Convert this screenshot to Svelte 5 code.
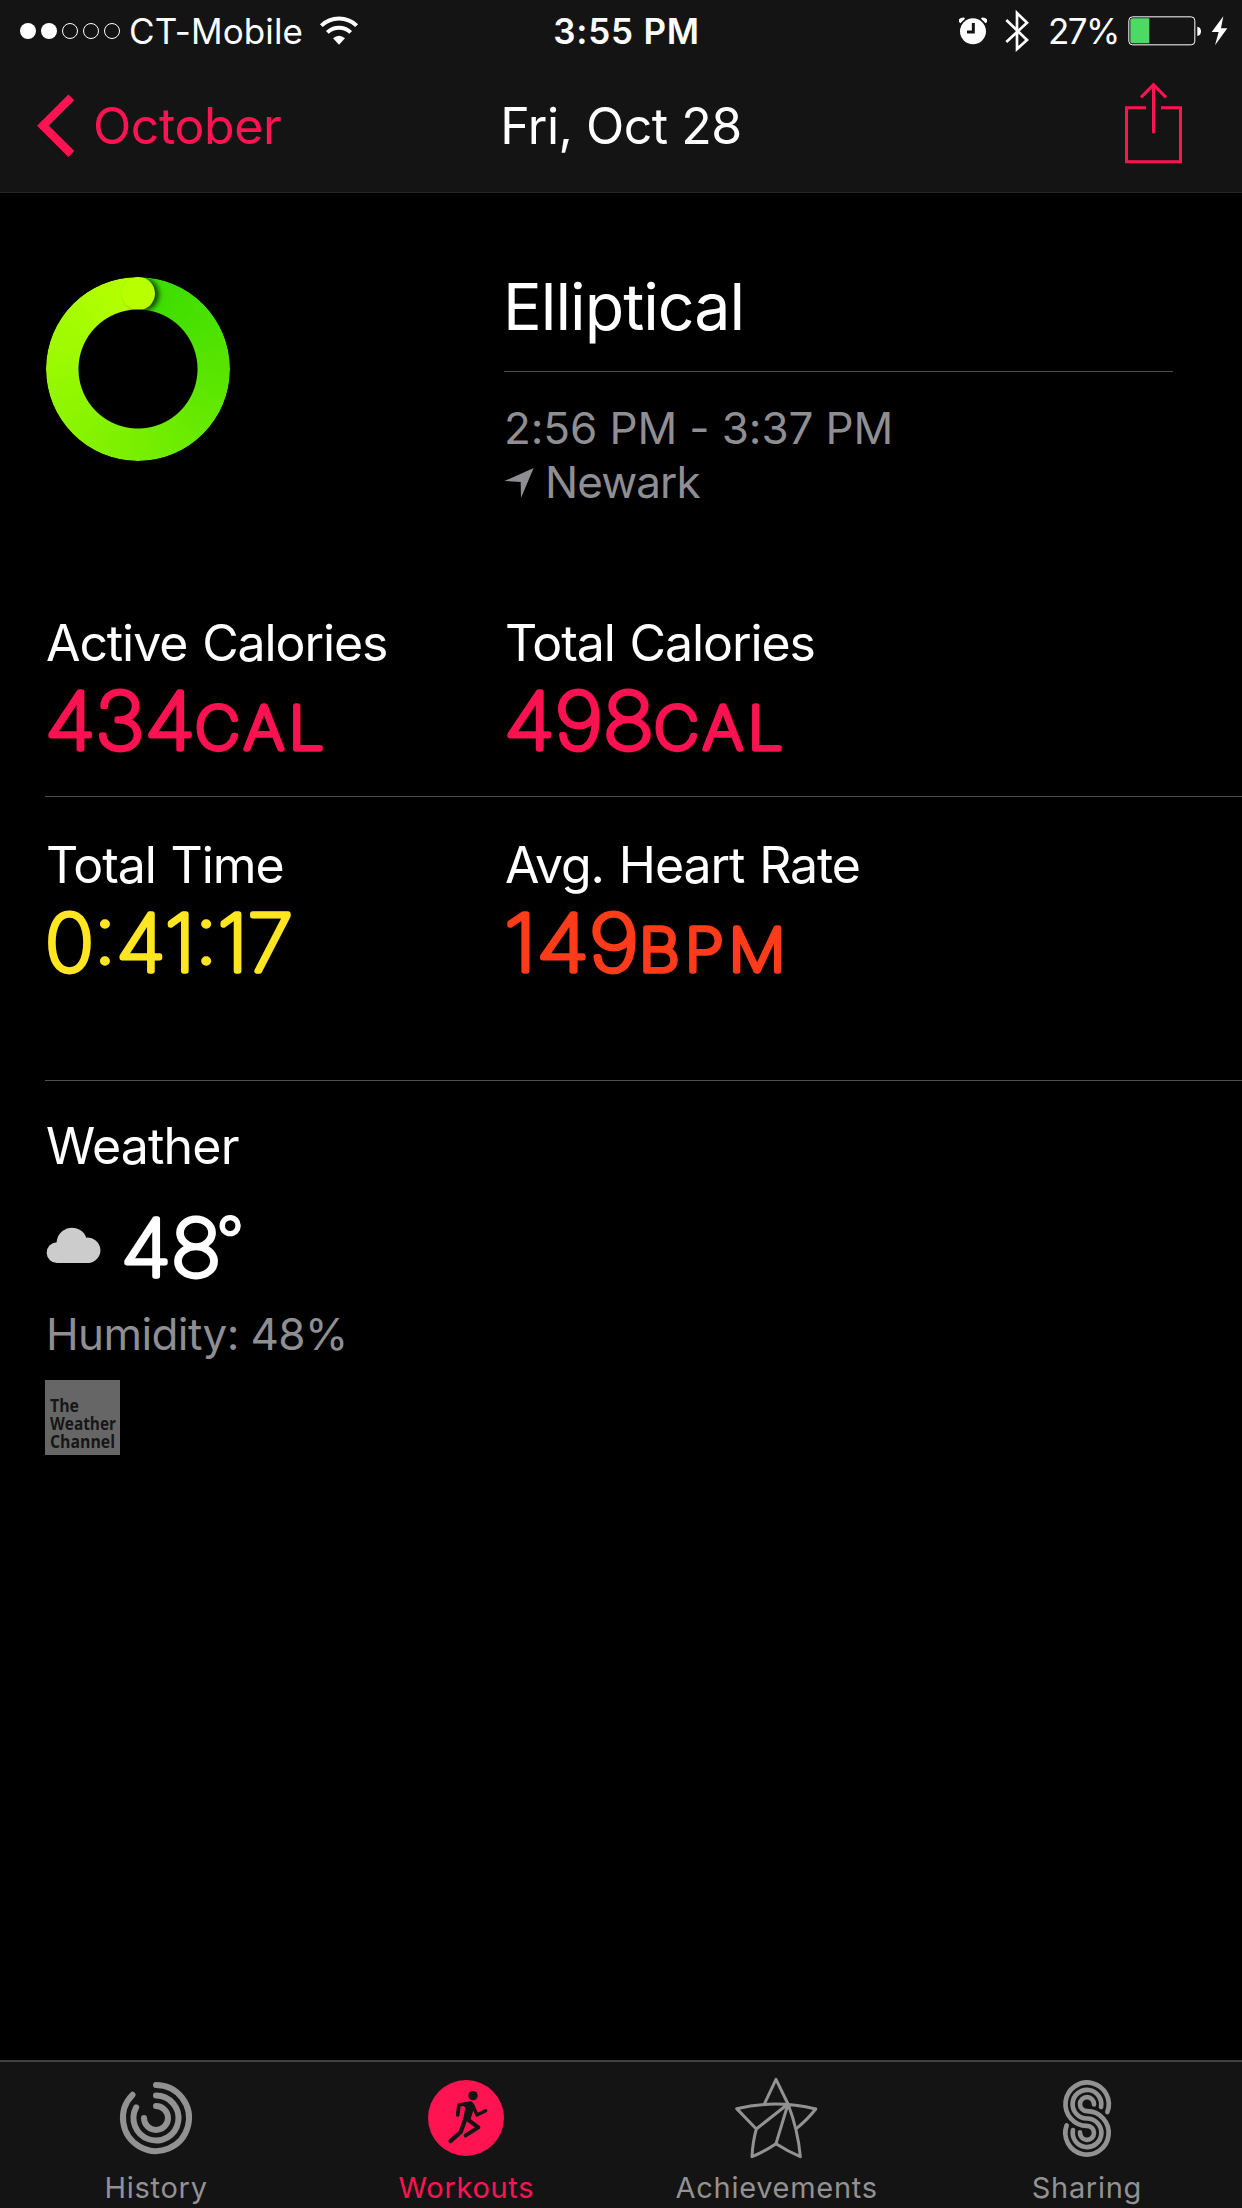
<script lang="ts">
	type Metric = {
		label: string;
		value: string;
		unit?: string;
		valueWidth: number;
		unitX?: number;
		unitWidth?: number;
		tone: string;
	};

	const rows: Metric[][] = [
		[
			{ label: 'Active Calories', value: '434', unit: 'CAL', valueWidth: 150, unitX: 150, unitWidth: 134, tone: 'pink' },
			{ label: 'Total Calories', value: '498', unit: 'CAL', valueWidth: 150, unitX: 150, unitWidth: 134, tone: 'pink' }
		],
		[
			{ label: 'Total Time', value: '0:41:17', valueWidth: 248, tone: 'yellow' },
			{ label: 'Avg. Heart Rate', value: '149', unit: 'BPM', valueWidth: 135, unitX: 135, unitWidth: 152, tone: 'orange' }
		]
	];

	const source = [
		{ word: 'The', y: 31.5, width: 29 },
		{ word: 'Weather', y: 49.5, width: 66 },
		{ word: 'Channel', y: 67.5, width: 65 }
	];

	const tabs = ['History', 'Workouts', 'Achievements', 'Sharing'];
	let active = $state('Workouts');
</script>

<div class="screen">
	<header>
		<div class="status">
			<div class="carrier">
				<svg class="signal" width="102" height="18" viewBox="0 0 102 18">
					{#each [0, 1, 2, 3, 4] as i}
						<circle cx={9 + i * 21} cy="9" r={i < 2 ? 8 : 7.5} class:on={i < 2} />
					{/each}
				</svg>
				<span class="network">CT-Mobile</span>
				<svg class="wifi" width="38" height="28" viewBox="0 0 114 84">
					<path d="M4 26 A76 76 0 0 1 110 26" />
					<path d="M22 46 A51 51 0 0 1 92 46" />
					<path class="solid" d="M57 83 L39 64 Q57 48 75 64 Z" />
				</svg>
			</div>
			<span class="clock">3:55 PM</span>
			<div class="indicators">
				<svg width="28" height="28" viewBox="0 0 84 84">
					<circle cx="42" cy="43" r="39" fill="#fff" />
					<path d="M0 7 Q6 1 16 2 L18 5 L4 19 L0 15 Z M84 7 Q78 1 68 2 L66 5 L80 19 L84 15 Z" fill="#fff" />
					<path d="M43 18 V45 H24" fill="none" stroke="#141414" stroke-width="9" />
				</svg>
				<svg class="bluetooth" width="24" height="42" viewBox="0 0 72 126">
					<path d="M4 30 L66 90 L36 117 V9 L66 38 L4 96" />
				</svg>
				<span class="percent">27%</span>
				<svg class="battery" width="74" height="30" viewBox="0 0 222 90">
					<rect x="2.5" y="2.5" width="198" height="84" rx="11" fill="none" stroke="#fff" stroke-width="3" />
					<path d="M13 7 H64 V82 H13 Q7 82 7 76 V13 Q7 7 13 7 Z" fill="#4cd964" />
					<path d="M208 32 Q219 34 219 46 Q219 58 208 60 Z" fill="#fff" />
				</svg>
				<svg width="17" height="30" viewBox="0 0 51 90">
					<path d="M37 1 L2 48 H23 L12 88 L49 37 H30 Z" fill="#fff" />
				</svg>
			</div>
		</div>
		<nav class="navbar">
			<button class="back">
				<svg width="40" height="64" viewBox="0 0 120 192">
					<path d="M109 10 L24 95 L109 180" />
				</svg>
				<span>October</span>
			</button>
			<h1>Fri, Oct 28</h1>
			<button class="share" aria-label="Share">
				<svg width="57" height="82" viewBox="0 0 171 246">
					<path d="M63 77 H4.5 V239 H166.5 V77 H108" />
					<path d="M85.5 154 V8 M48 46 L85.5 8 L123 46" />
				</svg>
			</button>
		</nav>
	</header>

	<main>
		<section class="summary">
			<div class="ring"></div>
			<div class="details">
				<h2>Elliptical</h2>
				<p class="time">2:56 PM - 3:37 PM</p>
				<p class="place">
					<svg width="30" height="30" viewBox="0 0 90 90">
						<path d="M89 0 L1 39 L50 42 L51 90 Z" />
					</svg>
					<span>Newark</span>
				</p>
			</div>
		</section>

		{#each rows as row}
			<section class="metrics">
				{#each row as metric}
					<div class="metric">
						<h3>{metric.label}</h3>
						<svg class="figure {metric.tone}" width="330" height="100">
							<text y="77" textLength={metric.valueWidth} lengthAdjust="spacingAndGlyphs">{metric.value}</text>
							{#if metric.unit}
								<text class="unit" x={metric.unitX} y="77" textLength={metric.unitWidth} lengthAdjust="spacingAndGlyphs">{metric.unit}</text>
							{/if}
						</svg>
					</div>
				{/each}
			</section>
		{/each}

		<section class="weather">
			<h3>Weather</h3>
			<div class="temperature">
				<svg class="cloud" width="56" height="40" viewBox="0 0 168 120">
					<path d="M34 117 A31 31 0 0 1 32 55 A46 46 0 0 1 121 41 A38 38 0 0 1 129 117 Z" />
				</svg>
				<svg class="figure white" width="160" height="100">
					<text x="1" y="77" textLength="100" lengthAdjust="spacingAndGlyphs">48</text>
					<text class="degree" x="97" y="61">°</text>
				</svg>
			</div>
			<p class="humidity">Humidity: 48%</p>
			<svg class="source" width="75" height="75">
				{#each source as line}
					<text x="5" y={line.y} textLength={line.width} lengthAdjust="spacingAndGlyphs">{line.word}</text>
				{/each}
			</svg>
		</section>
	</main>

	<footer>
		{#each tabs as tab}
			<button class="tab" class:active={tab === active} onclick={() => (active = tab)}>
				{#if tab === 'History'}
					<svg width="84" height="84" viewBox="-42 -42 84 84">
						<g class="line" stroke-width="6">
							<path d="M0 -33 A33 33 0 1 1 -23.5 -23.2" />
							<path d="M0 -22.5 A22.5 22.5 0 1 1 -19.8 -10.7" />
							<path d="M0 -12 A12 12 0 1 1 -12 0" />
						</g>
					</svg>
				{:else if tab === 'Workouts'}
					<svg width="84" height="84" viewBox="132 78 252 252">
						<circle cx="258" cy="204" r="114" fill="currentColor" />
						<g class="runner">
							<circle cx="279" cy="137" r="14" />
							<path class="torso" d="M238 160 L272 155 Q282 157 284 168 L271 210 L249 212 L256 172 Z" />
							<path d="M233 195 L237 165 L272 159" stroke-width="11" />
							<path d="M279 168 L291 195 L317 182" stroke-width="10" />
							<path d="M257 205 L242 246 L212 273" stroke-width="13" />
							<path d="M260 206 L295 232 L257 256" stroke-width="12" />
						</g>
					</svg>
				{:else if tab === 'Achievements'}
					<svg width="84" height="84" viewBox="225 78 252 252">
						<g class="line" stroke-width="9">
							<path d="M314 160 L348 88 L384 162" />
							<path d="M467 177 Q348 148 230 176 L289 237 Q278 276 276 320 Q314 304 348 281 Q384 304 421 320 Q414 240 384 162 L289 237" />
							<path d="M384 162 L348 281 M467 177 Q444 207 410 235" />
						</g>
					</svg>
				{:else}
					<svg width="84" height="84" viewBox="105 78 252 252">
						<g class="line" stroke-width="14">
							<path d="M292 186 A65 65 0 1 0 231 227.5 A21 21 0 1 1 210 247" />
							<path d="M273 171 A43 43 0 1 0 231 205.5 A43 43 0 1 1 189 240" />
							<path d="M252 163 A21 21 0 1 0 231 183.5 A65 65 0 1 1 170 226" />
						</g>
					</svg>
				{/if}
				<span>{tab}</span>
			</button>
		{/each}
	</footer>
</div>

<style>
	:global(body) {
		background: #000;
	}
	.screen {
		width: 1242px;
		height: 2208px;
		display: flex;
		flex-direction: column;
		overflow: hidden;
		background: #000;
		color: #fff;
		font-family: Inter, 'Liberation Sans', sans-serif;
		--bar: #141414;
		--accent: #ff1451;
		--rule: #505050;
		--muted: #8e8e93;
	}
	h1,
	h2,
	h3,
	p {
		margin: 0;
		font-weight: 400;
		white-space: nowrap;
	}
	button {
		border: 0;
		padding: 0;
		background: none;
		color: inherit;
		font: inherit;
	}
	svg {
		display: block;
		flex: none;
		overflow: visible;
	}

	header {
		box-sizing: border-box;
		height: 193px;
		background: var(--bar);
		border-bottom: 1px solid #262626;
	}
	.status {
		display: grid;
		grid-template-columns: 1fr auto 1fr;
		align-items: center;
		height: 62px;
		padding: 0 14px 0 19px;
		font-size: 35px;
		line-height: 62px;
		white-space: nowrap;
	}
	.carrier,
	.indicators {
		display: flex;
		align-items: center;
	}
	.signal {
		fill: none;
		stroke: #fff;
		stroke-width: 1;
	}
	.signal .on {
		fill: #fff;
		stroke: none;
	}
	.network {
		margin-left: 8px;
		letter-spacing: 0.1px;
	}
	.wifi {
		margin-left: 17px;
		fill: none;
		stroke: #fff;
		stroke-width: 12;
	}
	.wifi .solid {
		fill: #fff;
		stroke: none;
	}
	.clock {
		padding-left: 6px;
		font-weight: 600;
		letter-spacing: 0.8px;
	}
	.indicators {
		justify-content: flex-end;
	}
	.bluetooth {
		margin-left: 18px;
		fill: none;
		stroke: #fff;
		stroke-width: 8;
	}
	.percent {
		margin-left: 19px;
		letter-spacing: -1.5px;
	}
	.battery {
		margin: 0 9px;
	}

	.navbar {
		display: grid;
		grid-template-columns: 1fr auto 1fr;
		align-items: center;
		height: 128px;
		padding: 0 35px;
		font-size: 50px;
		line-height: 128px;
	}
	.back {
		display: flex;
		align-items: center;
		color: var(--accent);
		letter-spacing: -0.4px;
	}
	.back svg {
		fill: none;
		stroke: var(--accent);
		stroke-width: 25;
	}
	.back span {
		margin-left: 18px;
	}
	h1 {
		font-size: 50px;
		letter-spacing: -0.5px;
	}
	.share {
		justify-self: end;
		margin: 0 25px 6px 0;
	}
	.share svg {
		fill: none;
		stroke: var(--accent);
		stroke-width: 9;
	}

	main {
		flex: 1;
	}
	.summary {
		display: grid;
		grid-template-columns: 459px 669px;
		padding: 74px 0 66px 45px;
	}
	.ring {
		position: relative;
		width: 184px;
		height: 184px;
		margin: 10px 0 0 1px;
		border-radius: 50%;
		background: conic-gradient(#38dc00, #57e500 25%, #78ef00 50%, #99f900 75%, #b8ff00);
		mask: radial-gradient(circle, transparent 59px, #000 60px);
	}
	/* rounded end of the closed ring, overlapping its start */
	.ring::after {
		content: '';
		position: absolute;
		top: 0;
		left: 76px;
		width: 33px;
		height: 33px;
		border-radius: 50%;
		background: #b8ff00;
		box-shadow: 4px 1px 5px rgba(0, 0, 0, 0.7);
	}
	.details h2 {
		padding: 1px 0 25px;
		border-bottom: 1px solid var(--rule);
		font-size: 64.5px;
		letter-spacing: -1px;
		line-height: 78px;
		text-indent: -1px;
	}
	.time,
	.place,
	.humidity {
		color: var(--muted);
		font-size: 44px;
		line-height: 54px;
	}
	.time {
		margin-top: 29px;
		letter-spacing: -0.1px;
	}
	.place {
		display: flex;
		align-items: center;
		letter-spacing: -0.9px;
	}
	.place svg {
		margin: 2px 11px 0 0;
		fill: var(--muted);
	}
	.humidity {
		letter-spacing: -0.6px;
		text-indent: 1px;
	}

	.metrics {
		display: grid;
		grid-template-columns: 459px 1fr;
		box-sizing: border-box;
		height: 222px;
		margin-left: 45px;
		padding-top: 38px;
		border-bottom: 1px solid var(--rule);
	}
	.metrics + .metrics {
		height: 284px;
	}
	h3 {
		font-size: 50px;
		letter-spacing: -1.1px;
		line-height: 60px;
		text-indent: 1px;
		word-spacing: 2px;
	}
	/* a thin face under a round-joined stroke gives the figures soft ends */
	.figure {
		font-size: 78px;
		font-weight: 100;
		fill: currentColor;
		stroke: currentColor;
		stroke-width: 5.4;
		stroke-linejoin: round;
		stroke-linecap: round;
	}
	.metric .figure {
		margin-top: -1px;
	}
	.unit {
		font-size: 59px;
		letter-spacing: 5px;
		stroke-width: 5.6;
	}
	.degree {
		font-size: 58px;
		stroke-width: 4;
	}
	.pink {
		color: #fc1250;
	}
	.yellow {
		color: #ffe620;
	}
	.orange {
		color: #ff3b1a;
	}
	.white {
		color: #fff;
	}

	.weather {
		padding: 35px 0 0 45px;
	}
	.weather h3 {
		letter-spacing: -0.8px;
	}
	.temperature {
		display: flex;
		align-items: center;
		height: 131px;
	}
	.cloud {
		margin: 5px 0 0 1px;
		fill: #ccc;
	}
	.temperature .figure {
		margin: 14px 0 0 18px;
	}
	.source {
		margin-top: 19px;
		background: #666;
		fill: #161616;
		font: 700 17.5px 'Open Sans', sans-serif;
	}

	footer {
		display: grid;
		grid-template-columns: repeat(4, 1fr);
		box-sizing: border-box;
		height: 148px;
		padding-left: 1px;
		border-top: 2px solid #404040;
		background: var(--bar);
	}
	.tab {
		display: flex;
		flex-direction: column;
		align-items: center;
		padding-top: 14px;
		color: #929292;
		font-size: 29px;
		line-height: 36px;
	}
	.tab.active {
		color: var(--accent);
	}
	.tab span {
		margin-top: 10px;
		letter-spacing: 0.7px;
	}
	.line {
		fill: none;
		stroke: currentColor;
		stroke-linecap: round;
		stroke-linejoin: round;
	}
	.runner {
		fill: none;
		stroke: var(--bar);
		stroke-linecap: round;
		stroke-linejoin: round;
	}
	.runner circle,
	.runner .torso {
		fill: var(--bar);
		stroke: none;
	}
</style>
